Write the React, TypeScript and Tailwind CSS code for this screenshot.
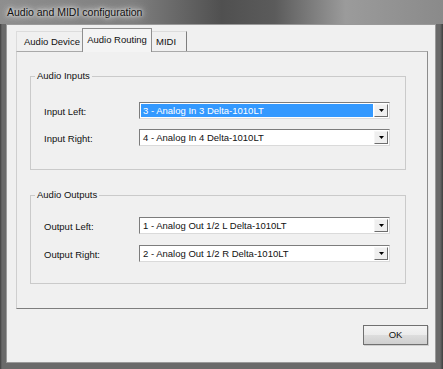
import React from "react";

function Combo({ text, selected }: { text: string; selected?: boolean }) {
  return (
    <div className="w-[251px] h-[17px] flex border border-t-[#7c7c7c] border-l-[#7c7c7c] border-r-[#dadada] border-b-[#dadada] bg-white p-[1px]">
      <div
        className={
          selected
            ? "flex-1 flex items-center pl-[2px] pt-[1px] bg-[#3399ff] text-white whitespace-nowrap"
            : "flex-1 flex items-center pl-[2px] pt-[1px] text-[#111] whitespace-nowrap"
        }
      >
        {text}
      </div>
      <div className="w-[14px] ml-[1px] flex items-center justify-center bg-[#efefef] border border-t-[#f6f6f6] border-l-[#f6f6f6] border-r-[#6e6e6e] border-b-[#6e6e6e]">
        <svg width="5" height="3" viewBox="0 0 5 3">
          <path d="M0 0h5L2.5 3z" fill="#000" />
        </svg>
      </div>
    </div>
  );
}

function Row({ label, value, selected }: { label: string; value: string; selected?: boolean }) {
  return (
    <div className="flex items-center">
      <div className="w-[95px] pt-[2px] text-[#111] whitespace-nowrap">{label}</div>
      <Combo text={value} selected={selected} />
    </div>
  );
}

export default function App() {
  return (
    <div className="w-[443px] h-[369px] flex flex-col bg-[#5f5f5f] font-['Liberation_Sans',Arial,sans-serif] text-[9.5px] leading-[12px] text-black overflow-hidden">
      <div className="h-[24px] shrink-0 flex items-center pl-[7px] bg-[linear-gradient(90deg,#8e8e8e_0%,#7f7f7f_30%,#505050_50%,#5b5b5b_62%,#9b9b9b_78%,#8a8a8a_100%)]">
        <span className="text-[10.5px] text-[#111] whitespace-nowrap [text-shadow:0_0_6px_#e6e6e6,0_0_10px_#d4d4d4,0_0_3px_#eeeeee]">
          Audio and MIDI configuration
        </span>
      </div>
      <div className="flex-1 flex pl-[6px] pr-[7px] pb-[6px] bg-[linear-gradient(90deg,#3e3e3e_0px,#6a6a6a_2px,#6a6a6a_calc(100%-3px),#3e3e3e_100%)]">
        <div className="flex-1 flex flex-col bg-[#f0f0f0] border border-[#9a9a9a]">
          {/* tabs */}
          <div className="h-[26px] shrink-0 flex items-end pl-[9px]">
            <div className="w-[66px] h-[20px] flex items-center pl-[7px] border-t border-l border-[#dcdcdc] text-[#111] whitespace-nowrap">
              Audio Device
            </div>
            <div className="relative z-10 w-[70px] h-[24px] -mb-[1px] flex items-center justify-center pb-[2px] bg-[#f4f4f4] border-t border-l border-r border-[#8f8f8f] text-[#111] whitespace-nowrap">
              Audio Routing
            </div>
            <div className="w-[35px] h-[20px] flex items-center pl-[4px] border-t border-r border-t-[#dcdcdc] border-r-[#7e7e7e] text-[#111]">
              MIDI
            </div>
          </div>
          {/* panel */}
          <div className="h-[258px] shrink-0 ml-[9px] mr-[7px] border border-t-[#a9a9a9] border-l-[#cfcfcf] border-r-[#8c8c8c] border-b-[#7e7e7e] pl-[13px] pr-[21px] pt-[18px]">
            <fieldset className="border border-[#cacaca]">
              <legend className="ml-[4px] px-[2px] text-[#111] leading-[12px]">Audio Inputs</legend>
              <div className="pl-[13px] pr-[14px] pt-[20px] pb-[23px] flex flex-col gap-[10px]">
                <Row label="Input Left:" value="3 - Analog In 3 Delta-1010LT" selected />
                <Row label="Input Right:" value="4 - Analog In 4 Delta-1010LT" />
              </div>
            </fieldset>
            <fieldset className="mt-[19px] border border-[#cacaca]">
              <legend className="ml-[4px] px-[2px] text-[#111] leading-[12px]">Audio Outputs</legend>
              <div className="pl-[13px] pr-[14px] pt-[16px] pb-[21px] flex flex-col gap-[11px]">
                <Row label="Output Left:" value="1 - Analog Out 1/2 L Delta-1010LT" />
                <Row label="Output Right:" value="2 - Analog Out 1/2 R Delta-1010LT" />
              </div>
            </fieldset>
          </div>
          {/* buttons */}
          <div className="flex justify-end mt-[16px] mr-[7px]">
            <button className="w-[65px] h-[20px] flex items-center justify-center border border-[#707070] bg-[linear-gradient(180deg,#f4f4f4_0%,#ebebeb_50%,#dddddd_51%,#cfcfcf_100%)] text-[#111] shadow-[1px_1px_0_#cfcfcf]">
              OK
            </button>
          </div>
        </div>
      </div>
    </div>
  );
}
